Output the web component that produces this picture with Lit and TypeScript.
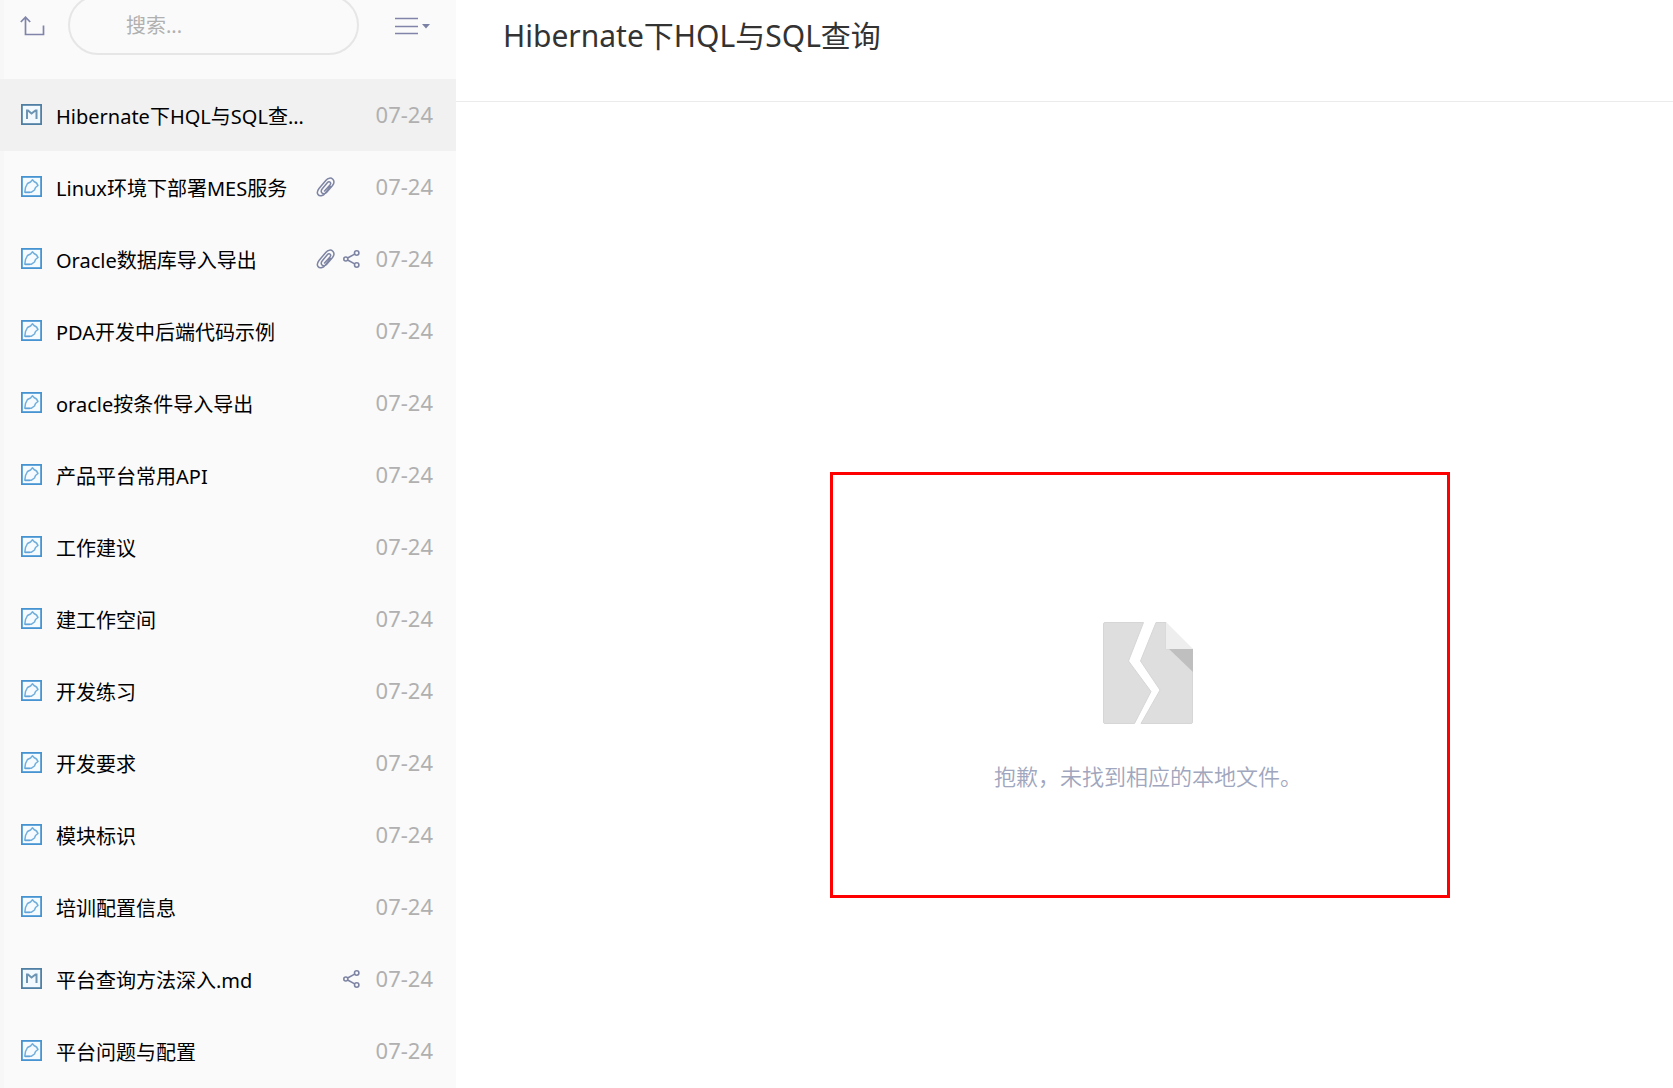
import { LitElement, html, css, svg, nothing } from "lit";
import { customElement, property, state } from "lit/decorators.js";

interface Note {
  title: string;
  date: string;
  kind: "note" | "markdown";
  clip?: boolean;
  shared?: boolean;
}

const NOTES: Note[] = [
  { title: "Hibernate下HQL与SQL查询", date: "07-24", kind: "markdown" },
  { title: "Linux环境下部署MES服务", date: "07-24", kind: "note", clip: true },
  { title: "Oracle数据库导入导出", date: "07-24", kind: "note", clip: true, shared: true },
  { title: "PDA开发中后端代码示例", date: "07-24", kind: "note" },
  { title: "oracle按条件导入导出", date: "07-24", kind: "note" },
  { title: "产品平台常用API", date: "07-24", kind: "note" },
  { title: "工作建议", date: "07-24", kind: "note" },
  { title: "建工作空间", date: "07-24", kind: "note" },
  { title: "开发练习", date: "07-24", kind: "note" },
  { title: "开发要求", date: "07-24", kind: "note" },
  { title: "模块标识", date: "07-24", kind: "note" },
  { title: "培训配置信息", date: "07-24", kind: "note" },
  { title: "平台查询方法深入.md", date: "07-24", kind: "markdown", shared: true },
  { title: "平台问题与配置", date: "07-24", kind: "note" },
];

const markdownIcon = html`<svg width="21" height="21" viewBox="0 0 21 21" aria-hidden="true">
  ${svg`<rect x="0.9" y="0.9" width="19.200" height="19.200" fill="#f2faff" stroke="#4f7fa3" stroke-width="1.800" />
  <path d="M6 15V6.500H7L10.500 9.500L14.500 6.500H15.500V15" fill="none" stroke="#6d94b3" stroke-width="2" />`}
</svg>`;

const noteIcon = html`<svg width="21" height="21" viewBox="0 0 21 21" aria-hidden="true">
  ${svg`<rect x="0.9" y="0.9" width="19.200" height="19.200" fill="#f5fbff" stroke="#4594d1" stroke-width="1.800" />
  <path d="M11.500 3.800L13 5.500L15.500 7L17 9.500L14.500 11.500L13.500 14L10.500 16.200H3.800L4.500 11.500L6.500 7.500L9.500 6Z" fill="none" stroke="#72aedb" stroke-width="1.500" stroke-linejoin="round" />
  <path d="M4 16.500H9" stroke="#5fa4d8" stroke-width="1.400" />`}
</svg>`;

const clipIcon = html`<svg width="20" height="20" viewBox="0 0 20 20" role="img" aria-label="附件">
  ${svg`<g fill="none" stroke="#7d84a3" stroke-width="1.500" stroke-linecap="round">
    <path d="M14.500 9.500L9 16.500C7 19 3.500 19.500 2 17.500C0.500 15.500 1.500 13.500 3 11.500L10 3.200C12 0.800 15 0.500 16.800 2.200C18.500 4 18 6.500 16.500 8.500L10.500 15.500C9 17.200 6.800 17 5.800 15.800C4.800 14.500 5.200 13 6.300 11.700L11.500 5.500C12.300 4.600 13.500 4.500 14.200 5.200C14.900 5.900 14.700 7 14 7.900L8.500 14" />
  </g>`}
</svg>`;

const shareIcon = html`<svg width="17" height="18" viewBox="0 0 17 18" role="img" aria-label="已分享">
  ${svg`<g fill="none" stroke="#7d84a3" stroke-width="1.600">
    <circle cx="2.800" cy="9" r="2" />
    <circle cx="13.700" cy="3" r="2.200" />
    <circle cx="13.700" cy="15" r="2.200" />
    <path d="M4.600 8L11.700 4.100M4.600 10L11.700 13.900" />
  </g>`}
</svg>`;

@customElement("note-row")
class NoteRow extends LitElement {
  @property({ attribute: false }) note!: Note;
  @property({ type: Boolean }) active = false;

  static styles = css`
    :host {
      display: block;
    }
    .row {
      display: grid;
      grid-template-columns: 23px minmax(0, 1fr) 48px auto;
      column-gap: 8px;
      align-items: center;
      height: 72px;
      box-sizing: border-box;
      padding: 0 23px 0 21px;
      color: #000;
      text-decoration: none;
    }
    .active {
      background: #f1f1f1;
    }
    .kind,
    .status {
      display: grid;
      align-items: center;
      padding-bottom: 1px;
    }
    .status {
      grid-template-columns: 20px 17px;
      column-gap: 7px;
    }
    .share {
      grid-column: 2;
      display: grid;
    }
    .clip {
      display: grid;
    }
    .title {
      padding: 4px 0 0 4px;
      font-size: 20px;
      line-height: 32px;
      white-space: nowrap;
      overflow: hidden;
      text-overflow: ellipsis;
    }
    .date {
      padding: 0 0 2px 4px;
      color: #b0b0b0;
      font-size: 22px;
      line-height: 32px;
    }
  `;

  render() {
    const n = this.note;
    return html`<a class="row ${this.active ? "active" : ""}" href="#" aria-current=${this.active ? "page" : nothing}>
      <span class="kind">${n.kind === "markdown" ? markdownIcon : noteIcon}</span>
      <span class="title">${n.title}</span>
      <span class="status">
        ${n.clip ? html`<span class="clip">${clipIcon}</span>` : nothing}
        ${n.shared ? html`<span class="share">${shareIcon}</span>` : nothing}
      </span>
      <time class="date">${n.date}</time>
    </a>`;
  }
}

@customElement("app-root")
class AppRoot extends LitElement {
  @state() private selected = 0;

  static styles = css`
    :host {
      display: block;
      font-family: "Noto Sans", "Noto Sans CJK SC", sans-serif;
    }
    .app {
      display: flex;
      height: 100vh;
      overflow: hidden;
      background: #fff;
    }
    .sidebar {
      flex: 0 0 456px;
      box-sizing: border-box;
      overflow: hidden;
      background: linear-gradient(to right, #f7f7f7 4px, #fafafa 4px);
    }
    .toolbar {
      display: flex;
      align-items: center;
      height: 60px;
      margin: -5px 0 24px;
      padding: 0 25px 0 20px;
    }
    .tool {
      display: grid;
      padding: 1px 0 0;
      border: 0;
      background: none;
      cursor: pointer;
    }
    .search {
      flex: 1;
      min-width: 0;
      height: 60px;
      box-sizing: border-box;
      margin: 0 36px 0 23px;
      padding: 0 56px;
      border: 2px solid #e6e6e6;
      border-radius: 30px;
      background: #fafafa;
      color: #333;
      font: inherit;
      font-size: 20px;
      outline: none;
    }
    .search::placeholder {
      color: #b0b0b0;
      opacity: 1;
    }
    .list {
      margin: 0;
      padding: 0;
      list-style: none;
    }
    .content {
      flex: 1;
      min-width: 0;
      display: flex;
      flex-direction: column;
    }
    .head {
      height: 102px;
      box-sizing: border-box;
      padding: 14px 47px 0;
      border-bottom: 1px solid #ebebeb;
    }
    .heading {
      margin: 0;
      color: #333;
      font-size: 30px;
      font-weight: 400;
      line-height: 44px;
    }
    .body {
      flex: 1;
      display: flex;
      align-items: center;
      justify-content: center;
      padding: 224px 0 0 167px;
      box-sizing: border-box;
    }
    .missing {
      position: relative;
      display: flex;
      flex-direction: column;
      align-items: center;
      gap: 36px;
    }
    .message {
      margin: 0;
      color: #a0a6bd;
      font-size: 22px;
      font-weight: 350;
      line-height: 32px;
      white-space: nowrap;
    }
    .marker {
      position: absolute;
      inset: -150px -148px -106px -164px;
      border: 3px solid #f00;
    }
  `;

  render() {
    return html`<div class="app" lang="zh-CN">
      <aside class="sidebar">
        <div class="toolbar">
          <button class="tool" type="button" aria-label="返回上级">
            <svg width="25" height="20" viewBox="0 0 25 20" fill="none" stroke="#8084a8" stroke-width="1.700">
              <path d="M5.500 1.500V18.500H23.500V9.500M0.800 6L5.500 1.200L10.200 6" />
            </svg>
          </button>
          <input class="search" type="search" aria-label="搜索" placeholder="搜索..." />
          <button class="tool" type="button" aria-label="排序方式">
            <svg width="36" height="18" viewBox="0 0 36 18">
              <path d="M0 1.500H23M0 9.500H23M0 16.500H23" stroke="#8084a8" stroke-width="1.600" />
              <path d="M27 7H35L31 11.500Z" fill="#7b80a5" />
            </svg>
          </button>
        </div>
        <ul class="list">
          ${NOTES.map(
            (note, i) => html`<li @click=${() => (this.selected = i)}>
              <note-row .note=${note} ?active=${i === this.selected}></note-row>
            </li>`,
          )}
        </ul>
      </aside>
      <main class="content">
        <header class="head">
          <h1 class="heading">${NOTES[this.selected].title}</h1>
        </header>
        <section class="body">
          <div class="missing">
            <svg width="90" height="102" viewBox="0 0 90 102" aria-hidden="true">
              <path d="M2 0.500H40.500L25.500 39L48 69.500L31.500 101.500H2Q0.500 101.500 0.500 100V2Q0.500 0.500 2 0.500Z" fill="#dedede" stroke="#d6d6d6" />
              <path d="M53 0.500H63V27H89.500V100Q89.500 101.500 88 101.500H38L57 68L37.500 39Z" fill="#dedede" stroke="#d6d6d6" />
              <path d="M63 0L90 27H63Z" fill="#eee" />
              <path d="M66 27H90V50Z" fill="#bfbfbf" />
            </svg>
            <p class="message">抱歉，未找到相应的本地文件。</p>
            <div class="marker"></div>
          </div>
        </section>
      </main>
    </div>`;
  }
}
